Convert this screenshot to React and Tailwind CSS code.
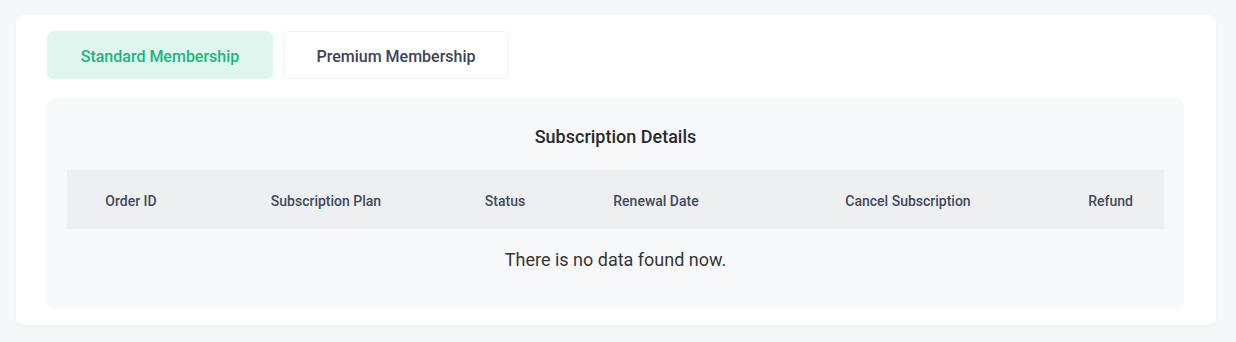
import React, { useState } from "react";

const columns = [
  { label: "Order ID", w: "w-[128px]" },
  { label: "Subscription Plan", w: "w-[262px]" },
  { label: "Status", w: "w-[96px]" },
  { label: "Renewal Date", w: "w-[206px]" },
  { label: "Cancel Subscription", w: "w-[298px]" },
  { label: "Refund", w: "flex-1" },
];

const App = () => {
  const [tab, setTab] = useState("standard");

  const tabClass = (active) =>
    active
      ? "w-[226px] h-[48px] pt-[4px] rounded-md bg-[#dff5ee] border border-[#dff5ee] text-[#1cb57f] text-[16px] font-medium"
      : "w-[226px] h-[48px] pt-[4px] rounded-md bg-white border border-[#eef0f2] text-[#3b4456] text-[16px] font-medium";

  return (
    <div className="min-h-[342px] bg-[#f5f8f9] pt-[15px] pl-4 pr-5 pb-4 font-['Roboto',sans-serif]">
      <div className="bg-white rounded-lg pt-4 pb-4 pl-[31px] pr-[32px] shadow-[0_1px_3px_rgba(0,0,0,0.03)]">
        <div className="flex gap-[10px]">
          <button onClick={() => setTab("standard")} className={tabClass(tab === "standard")}>
            Standard Membership
          </button>
          <button onClick={() => setTab("premium")} className={tabClass(tab === "premium")}>
            Premium Membership
          </button>
        </div>

        <div className="mt-[19px] bg-[#f7f8fa] rounded-lg px-5 pt-[26px] pb-[19px]">
          <h3 className="text-center text-[18px] font-medium text-[#2a2a2a] leading-[26px]">
            Subscription Details
          </h3>
          <div className="mt-[20px] flex items-center h-[59px] pt-[3px] bg-[#eeeff1]">
            {columns.map((c) => (
              <div key={c.label} className={`${c.w} text-center text-[14px] font-medium text-[#414b5e]`}>
                {c.label}
              </div>
            ))}
          </div>
          <p className="text-center text-[18px] text-[#363636] leading-[24px] pt-[19px] pb-[18px]">
            There is no data found now.
          </p>
        </div>
      </div>
    </div>
  );
};

export default App;
